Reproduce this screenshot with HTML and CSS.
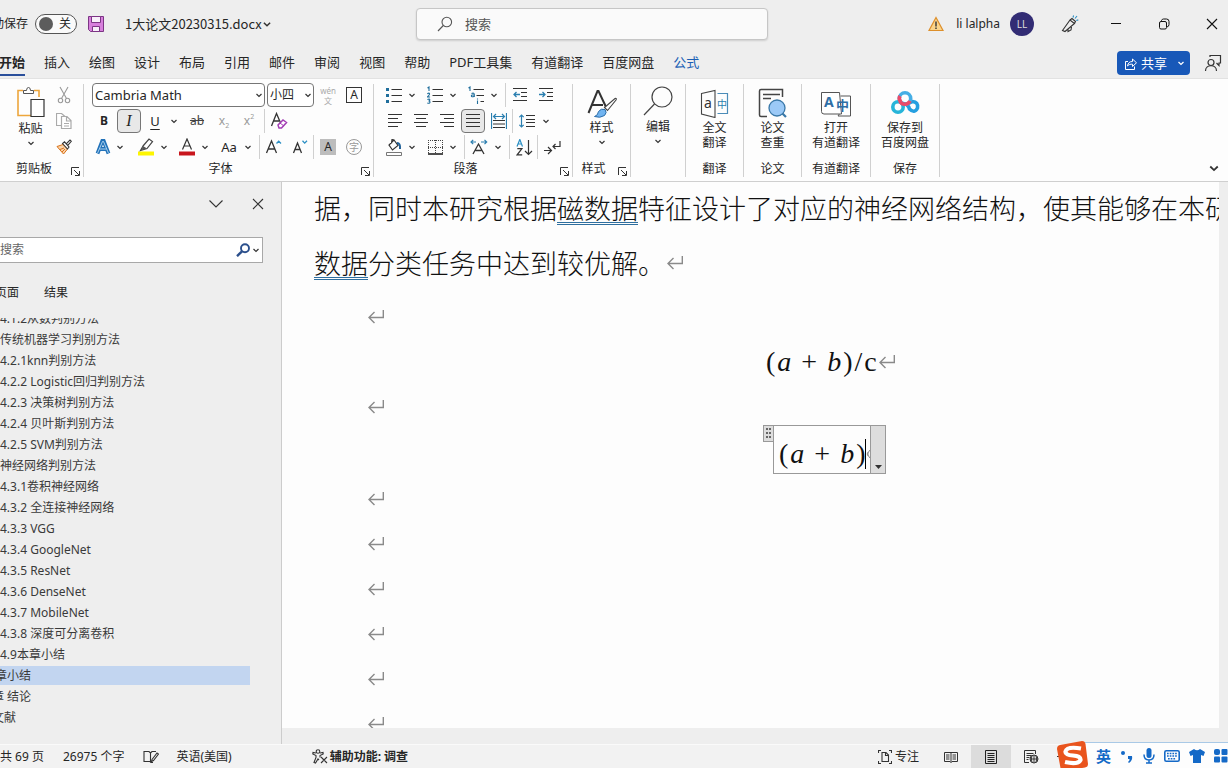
FILE: index.html
```html
<!DOCTYPE html>
<html lang="zh-CN">
<head>
<meta charset="utf-8">
<title>1大论文20230315.docx</title>
<link rel="stylesheet" href="styles.css">
</head>
<body>
<svg class="defs" aria-hidden="true">
  <symbol id="chev" viewBox="0 0 8 8"><path d="M1.5 3 4 5.4 6.500 3" fill="none" stroke="#333" stroke-width="1.200"/></symbol>
  <symbol id="launch" viewBox="0 0 9 9"><path d="M.5 8V.5H8M3 3l5 5M8.500 4v4.500H4" fill="none" stroke="#333"/></symbol>
  <symbol id="ret" viewBox="0 0 16 14"><path d="M15.300 0v7.500H1M6.500 2 1 7.500 6.500 13" fill="none" stroke="#8a8a8a" stroke-width="1.400"/></symbol>
</svg>
<div class="window">
  <header class="titlebar">
    <div class="title-left">
      <span class="autosave">动保存</span>
      <button class="toggle" aria-label="自动保存"><i></i>关</button>
      <button class="plain save" aria-label="保存"><svg width="16" height="16" viewBox="0 0 16 16"><path d="M.5.5h15v15H2.500l-2-2z" fill="#d77fdc" stroke="#7c3585"/><path d="M3.500.5h9v6h-9zM4.500 10.500h7v5h-7z" fill="#f8effa" stroke="#7c3585"/></svg></button>
      <button class="plain docname">1大论文20230315.docx<svg width="10" height="10"><use href="#chev"/></svg></button>
    </div>
    <label class="search">
      <svg width="16" height="16" viewBox="0 0 16 16" fill="none" stroke="#555" stroke-width="1.100"><circle cx="9.800" cy="6" r="4.800"/><path d="M6.300 9.500 1 15"/></svg>
      <input type="text" placeholder="搜索" aria-label="搜索">
    </label>
    <div class="title-right">
      <svg width="16" height="16" viewBox="0 0 16 16"><path d="M8 1.500 15 14.500H1z" fill="#fbd48a" stroke="#dd8f2b" stroke-width="1.200"/><path d="M8 5.500v5M8 11.500v1.600" stroke="#333" stroke-width="1.400"/></svg>
      <span class="user">li lalpha</span>
      <span class="avatar">LL</span>
      <button class="plain pen" aria-label="即将推出"><svg width="18" height="18" viewBox="0 0 18 18" fill="none" stroke="#333" stroke-width="1.100"><path d="M1.500 15.500 9 5l4.500 3.500L4 16.500zM9 5l2-1.500 3.500 3-1 2M7 13.800v2.700l3-1.500.5-3"/><path d="m12 2.500.6-2M14 3.500l2-2.500M15.300 5.500l2-.6" stroke="#2b8fc4"/></svg></button>
      <button class="plain winbtn" aria-label="最小化"><svg width="12" height="12" viewBox="0 0 12 12"><path d="M1 5.500h10" stroke="#111"/></svg></button>
      <button class="plain winbtn" aria-label="还原"><svg width="12" height="12" viewBox="0 0 12 12" fill="none" stroke="#111"><rect x="1.500" y="3.500" width="7" height="7.500" rx="1.500"/><path d="M3.500 3V2.500Q4 1 5.500 1h3q2.500 0 2.500 2.500v3Q11 8.500 9 9"/></svg></button>
      <button class="plain winbtn last" aria-label="关闭"><svg width="12" height="12" viewBox="0 0 12 12"><path d="m1 1 10 10M11 1 1 11" stroke="#111" stroke-width="1.100"/></svg></button>
    </div>
  </header>

  <nav class="tabs">
    <button class="tab active">开始</button><button class="tab">插入</button><button class="tab">绘图</button><button class="tab">设计</button><button class="tab">布局</button><button class="tab">引用</button><button class="tab">邮件</button><button class="tab">审阅</button><button class="tab">视图</button><button class="tab">帮助</button><button class="tab">PDF工具集</button><button class="tab">有道翻译</button><button class="tab">百度网盘</button><button class="tab blue">公式</button>
    <button class="share"><svg width="13" height="13" viewBox="0 0 13 13" fill="none" stroke="#fff"><path d="M4 4.500H1.500v8h9V9.500M3.500 9c.5-3 2-4.500 5-4.500V2l4 3.800-4 3.700V7.200C6.500 7 5 7.500 3.500 9z"/></svg><span>共享</span><svg class="share-chev" width="8" height="8" viewBox="0 0 8 8"><path d="m1.500 3 2.500 2.400L6.500 3" fill="none" stroke="#fff" stroke-width="1.300"/></svg></button>
    <button class="plain comment" aria-label="批注"><svg width="18" height="18" viewBox="0 0 18 18" fill="none" stroke="#333" stroke-width="1.200"><circle cx="7" cy="8.500" r="3"/><path d="M1.500 17c0-7 11-7 11 0M6 3V1.500h10.500V9H15v2.500L12.500 9"/></svg></button>
  </nav>

  <section class="ribbon">
    <div class="group g-clip">
      <div class="clip">
        <button class="big paste"><svg width="30" height="32" viewBox="0 0 30 32" fill="none"><path d="M7 3.500H2v25h13M18 3.500h5V10" stroke="#eda63c" stroke-width="1.600"/><path d="M7.500 6.500v-3h3q0-3 2-3t2 3h3v3z" fill="#fff" stroke="#555"/><path d="M15 12.500h13V29.500H15z" fill="#fff" stroke="#333" stroke-width="1.200"/></svg><span>粘贴</span><svg class="down" width="8" height="8"><use href="#chev"/></svg></button>
        <div class="clip-side">
          <button class="ic" aria-label="剪切"><svg width="16" height="18" viewBox="0 0 16 18" fill="none" stroke="#999" stroke-width="1.100"><path d="m4 1 6.500 11.500M12 1 5.500 12.500"/><circle cx="4.500" cy="14.500" r="2.200"/><circle cx="11.500" cy="14.500" r="2.200"/></svg></button>
          <button class="ic" aria-label="复制"><svg width="16" height="16" viewBox="0 0 16 16" fill="#fff" stroke="#aaa" stroke-width="1.200"><path d="M5.500 12.500h-5v-12h5L9 3.500M5.500 3.500H11l4 4v8H5.500zM10.500 4v4H15M8 10.500h5M8 13h5"/></svg></button>
          <button class="ic" aria-label="格式刷"><svg width="16" height="16" viewBox="0 0 16 16"><path d="m1 7.500 6-2L11.500 10l-4 5z" fill="#fbd3a8" stroke="#d9731c"/><path d="m6.500 4.500 5 5.500 1.500-2-4.500-5.200zM10.200 4.800 14 1l1.300 1.300-3.500 4" fill="#fff" stroke="#333" stroke-width="1.100"/><path d="m4 10.500 4-1.500M6 13l3-3" stroke="#d9731c"/></svg></button>
        </div>
      </div>
      <footer>剪贴板<svg class="launch" width="9" height="9"><use href="#launch"/></svg></footer>
    </div>

    <div class="group g-font">
      <div class="row">
        <span class="combo font-name"><select aria-label="字体"><option>Cambria Math</option></select><svg width="8" height="8"><use href="#chev"/></svg></span>
        <span class="combo font-size"><select aria-label="字号"><option>小四</option></select><svg width="8" height="8"><use href="#chev"/></svg></span>
        <button class="ic w26 wen"><span>wén</span><span>文</span></button>
        <button class="ic w26"><span class="boxed">A</span></button>
      </div>
      <div class="row">
        <button class="ic w24 bold">B</button>
        <button class="ic w24 on ital">I</button>
        <button class="ic w26 under">U</button><button class="ic w12" aria-label="更多下划线"><svg width="8" height="8"><use href="#chev"/></svg></button>
        <button class="ic w34 strike">ab</button>
        <button class="ic w20 gray">x<sub>2</sub></button>
        <button class="ic w30 gray">x<sup>2</sup></button>
        <i class="sep"></i>
        <button class="ic w26" aria-label="清除格式"><svg width="18" height="18" viewBox="0 0 18 18" fill="none"><path d="M1.500 14 6.500 1.500 11 12M3.500 9H9" stroke="#333" stroke-width="1.300"/><path d="m8 13 5-5 3.500 2.500-5 5.500H9z" fill="#fff" stroke="#a23cb4" stroke-width="1.500"/><path d="m10 11 4 3" stroke="#a23cb4"/></svg></button>
      </div>
      <div class="row">
        <button class="ic w22" aria-label="文本效果"><svg width="16" height="16" viewBox="0 0 16 16"><path d="M2.500 14.500 7.300 2h1.400l4.800 12.500M4.500 10h7" fill="none" stroke="#2272b9" stroke-width="3.800"/><path d="M2.600 14 7.500 2.500h1L13.400 14M4.500 10h7" fill="none" stroke="#c9e6fa" stroke-width=".8"/></svg></button><button class="ic w12" aria-label="更多效果"><svg width="8" height="8"><use href="#chev"/></svg></button>
        <button class="ic w24 ml8" aria-label="突出显示"><svg width="16" height="18" viewBox="0 0 16 18"><path d="M0 13.500h16v4H0z" fill="#fdf500"/><path d="m5 8 6-7 3.500 2.500L9 10.500l-6.500 2z" fill="#fff" stroke="#444" stroke-width="1.200"/><path d="m5 8 4 2.500-5.500 1.500z" fill="#555"/></svg></button><button class="ic w12" aria-label="突出显示颜色"><svg width="8" height="8"><use href="#chev"/></svg></button>
        <button class="ic w24 ml5" aria-label="字体颜色"><svg width="16" height="18" viewBox="0 0 16 18"><path d="M0 13.500h16v4H0z" fill="#c8161d"/><path d="M3.500 11.500 8 1l4.500 10.500M5.200 8h5.600" fill="none" stroke="#333" stroke-width="1.200"/></svg></button><button class="ic w12" aria-label="更多颜色"><svg width="8" height="8"><use href="#chev"/></svg></button>
        <button class="ic w26 ml5 case">Aa</button><button class="ic w12" aria-label="更改大小写"><svg width="8" height="8"><use href="#chev"/></svg></button>
        <i class="sep ml5"></i>
        <button class="ic w26" aria-label="增大字号"><svg width="18" height="16" viewBox="0 0 18 16" fill="none"><path d="M1.500 14 6.500 2l5 12M3.300 10h6.400" stroke="#333" stroke-width="1.300"/><path d="m11.500 4.500 2.200-2.300L16 4.500" stroke="#2b8fc4" stroke-width="1.300"/></svg></button>
        <button class="ic w26" aria-label="减小字号"><svg width="18" height="16" viewBox="0 0 18 16" fill="none"><path d="M2.500 14 6.500 4l4 10M4 10.500h5" stroke="#333" stroke-width="1.300"/><path d="m11.500 1.800 2.200 2.300L16 1.800" stroke="#2b8fc4" stroke-width="1.300"/></svg></button>
        <i class="sep"></i>
        <button class="ic w26"><span class="shade">A</span></button>
        <button class="ic w26"><span class="ring">字</span></button>
      </div>
      <footer>字体<svg class="launch" width="9" height="9"><use href="#launch"/></svg></footer>
    </div>

    <div class="group g-para">
      <div class="row">
        <button class="ic w24" aria-label="项目符号"><svg width="16" height="16" viewBox="0 0 16 16"><path d="M0 1h3v3H0zM0 7h3v3H0zM0 13h3v3H0z" fill="#1f6e9c"/><path d="M5.500 2.500H16M5.500 8.500H16M5.500 14.500H16" stroke="#333"/></svg></button><button class="ic w12" aria-label="更多符号"><svg width="8" height="8"><use href="#chev"/></svg></button>
        <button class="ic w24 ml5" aria-label="编号"><svg width="16" height="18" viewBox="0 0 16 18" fill="none"><path d="M.5 2 2 1v4M.3 7.800Q2.500 6.300 2.600 8q0 .8-2.200 3h2.700M.4 13.500q2.500-1 2.400.5-.3 1-1.300 1 1.600.1 1.500 1.200-.2 1.500-2.700.8" stroke="#1f6e9c" stroke-width="1.100"/><path d="M5.500 3.500H16M5.500 9.500H16M5.500 15.500H16" stroke="#333"/></svg></button><button class="ic w12" aria-label="更多编号"><svg width="8" height="8"><use href="#chev"/></svg></button>
        <button class="ic w24 ml5" aria-label="多级列表"><svg width="16" height="18" viewBox="0 0 16 18" fill="none"><path d="M.5 2 2 1v4M3.500 7.500q2.800-1 2.800 1V11M6.300 9q-3-.3-3 1 .3 1.500 3 .2M9.500 14.500V18M9.500 12.500v1" stroke="#1f6e9c" stroke-width="1.100"/><path d="M5.500 3.500H16M8.500 9.500H16M12.500 15.500H16" stroke="#333"/></svg></button><button class="ic w12" aria-label="更多列表"><svg width="8" height="8"><use href="#chev"/></svg></button>
        <i class="sep ml5"></i>
        <button class="ic w26" aria-label="减少缩进"><svg width="14" height="14" viewBox="0 0 14 14" fill="none"><path d="M0 .5h14M8 4.500h6M8 8.500h6M0 12.500h14" stroke="#333"/><path d="M7 6.500H1M3.500 4 1 6.500 3.500 9" stroke="#2b7fb0" stroke-width="1.300"/></svg></button>
        <button class="ic w26" aria-label="增加缩进"><svg width="14" height="14" viewBox="0 0 14 14" fill="none"><path d="M0 .5h14M8 4.500h6M8 8.500h6M0 12.500h14" stroke="#333"/><path d="M0 6.500h6M3.500 4 6 6.500 3.500 9" stroke="#2b7fb0" stroke-width="1.300"/></svg></button>
      </div>
      <div class="row">
        <button class="ic w26" aria-label="左对齐"><svg width="14" height="14" viewBox="0 0 14 14"><path d="M0 .5h14M0 4.500h10M0 8.500h14M0 12.500h10" stroke="#333"/></svg></button>
        <button class="ic w26" aria-label="居中"><svg width="14" height="14" viewBox="0 0 14 14"><path d="M0 .5h14M2 4.500h10M0 8.500h14M2 12.500h10" stroke="#333"/></svg></button>
        <button class="ic w26" aria-label="右对齐"><svg width="14" height="14" viewBox="0 0 14 14"><path d="M0 .5h14M4 4.500h10M0 8.500h14M4 12.500h10" stroke="#333"/></svg></button>
        <button class="ic w24 on" aria-label="两端对齐"><svg width="14" height="14" viewBox="0 0 14 14"><path d="M0 .5h14M0 4.500h14M0 8.500h14M0 12.500h14" stroke="#333"/></svg></button>
        <button class="ic w26" aria-label="分散对齐"><svg width="16" height="16" viewBox="0 0 16 16" fill="none"><path d="M.5 0v16M15.500 0v16M2.500 3.500h11M5 1 2.500 3.500 5 6M11 1l2.500 2.500L11 6" stroke="#2b7fb0" stroke-width="1.200"/><path d="M2 7.500h12M2 11h12M2 14.500h12" stroke="#333"/></svg></button>
        <i class="sep"></i>
        <button class="ic w26" aria-label="行距"><svg width="16" height="14" viewBox="0 0 16 14" fill="none"><path d="M7 1.500h9M7 5.500h9M7 8.500h9M7 12.500h9" stroke="#333"/><path d="M2.500 1v12M.3 3.200 2.500 1l2.200 2.200M.3 10.800 2.500 13l2.200-2.200" stroke="#2b7fb0" stroke-width="1.200"/></svg></button><button class="ic w12" aria-label="更多行距"><svg width="8" height="8"><use href="#chev"/></svg></button>
      </div>
      <div class="row">
        <button class="ic w24" aria-label="底纹"><svg width="16" height="17" viewBox="0 0 16 17" fill="none"><path d="M.5 13.500h15v3H.5z" stroke="#777"/><path d="m8 1 4 5.500L6.500 11 3 6zM8 1 6 .5l-.5 4" stroke="#333" stroke-width="1.200"/><path d="M11 4q3.500 0 3 6" stroke="#1f5f96" stroke-width="2"/></svg></button><button class="ic w12" aria-label="更多底纹"><svg width="8" height="8"><use href="#chev"/></svg></button>
        <button class="ic w24 ml5" aria-label="边框"><svg width="15" height="15" viewBox="0 0 15 15"><path d="M0 .5h15M0 7.500h15M.5 0v14M7.500 0v14M14.500 0v14" stroke="#444" stroke-dasharray="1 1"/><path d="M0 14h15" stroke="#222" stroke-width="1.600"/></svg></button><button class="ic w12" aria-label="更多边框"><svg width="8" height="8"><use href="#chev"/></svg></button>
        <i class="sep ml5"></i>
        <button class="ic w26" aria-label="中文版式"><svg width="18" height="16" viewBox="0 0 18 16" fill="none"><path d="M3 15 8.500 5 14 15M5.500 11.500h6" stroke="#333" stroke-width="1.300"/><path d="M6 3H1M3.200.8 1 3l2.200 2.200M11 3h5.500M14.500.8 16.700 3l-2.200 2.200" stroke="#2b7fb0" stroke-width="1.200"/></svg></button><button class="ic w12" aria-label="更多版式"><svg width="8" height="8"><use href="#chev"/></svg></button>
        <i class="sep ml5"></i>
        <button class="ic w26" aria-label="排序"><svg width="17" height="17" viewBox="0 0 17 17" fill="none"><path d="m1 7.500 2.800-7 2.700 7M2 5h3.600" stroke="#2b8fc4" stroke-width="1.200"/><path d="M1.300 9.700h4.600L1.200 15.800h5" stroke="#333" stroke-width="1.200"/><path d="M12.500 1v14.500M9 12l3.500 3.500L16 12" stroke="#333" stroke-width="1.200"/></svg></button>
        <i class="sep"></i>
        <button class="ic w26" aria-label="显示编辑标记"><svg width="17" height="15" viewBox="0 0 17 15" fill="none" stroke="#333" stroke-width="1.200"><path d="M16 1v5.500H9M11.500 4 9 6.500 11.500 9M0 10.500h7M4 7l3.500 3.500L4 14"/></svg></button>
      </div>
      <footer>段落<svg class="launch" width="9" height="9"><use href="#launch"/></svg></footer>
    </div>

    <div class="group g-58">
      <button class="big"><svg width="30" height="32" viewBox="0 0 30 32" fill="none"><path d="M1.500 27 10.500 5h1L19 21M5 19h11" stroke="#333" stroke-width="2"/><path d="M17.500 21.500 28 12.500q2-.5 1 1.500l-8.500 10.500z" fill="#fff" stroke="#444" stroke-width="1.100"/><path d="M7.500 30.500q3.500-1 4-5 2.500-3.500 6.500-2 2.500 3-.5 6-4.500 3-10 1z" fill="#71b4f0" stroke="#2a6ca8"/></svg><span>样式</span><svg class="down" width="8" height="8"><use href="#chev"/></svg></button>
      <footer class="shift">样式<svg class="launch" width="9" height="9"><use href="#launch"/></svg></footer>
    </div>
    <div class="group g-55">
      <button class="big edit"><svg width="30" height="30" viewBox="0 0 30 30" fill="none" stroke="#444" stroke-width="1.200"><circle cx="19" cy="11" r="10"/><path d="M11.500 18 1 29"/></svg><span>编辑</span><svg class="down" width="8" height="8"><use href="#chev"/></svg></button>
    </div>
    <div class="group g-58">
      <button class="big"><svg width="30" height="32" viewBox="0 0 30 32" fill="none"><path d="M1.500 7.500 15 4.500v27L1.500 28z" stroke="#444" stroke-width="1.100"/><path d="M17.500 7.500h10v20h-10" stroke="#4b8cb8" stroke-width="1.200"/><text class="ico-a" x="4" y="22">a</text><text class="ico-z" x="17" y="22">中</text></svg><span>全文<br>翻译</span></button>
      <footer>翻译</footer>
    </div>
    <div class="group g-58">
      <button class="big"><svg width="30" height="32" viewBox="0 0 30 32" fill="none"><path d="M9 30.500H3q-1.500 0-1.500-1.500V5q0-1.500 1.500-1.500h21.500V11M5 8.500h17M5 12.500h8" stroke="#444" stroke-width="1.500"/><circle cx="19" cy="22" r="8" fill="#9bc9f7" stroke="#3a78a8" stroke-width="1.300"/><path d="m24.500 27.500 3.500 3.500" stroke="#3a78a8" stroke-width="2.200"/></svg><span>论文<br>查重</span></button>
      <footer>论文</footer>
    </div>
    <div class="group g-69">
      <button class="big"><svg width="30" height="32" viewBox="0 0 30 32" fill="none"><path d="M19 27 17 30h12.500V10H19.500" fill="#fff" stroke="#555"/><path d="M.5 6.500h18l2 21.500H3q-2.500 0-2.500-2.500z" fill="#fff" stroke="#555"/><text class="ico-b" x="3" y="21">A</text><text class="ico-c" x="15" y="24">中</text></svg><span>打开<br>有道翻译</span></button>
      <footer>有道翻译</footer>
    </div>
    <div class="group g-69">
      <button class="big"><svg width="30" height="32" viewBox="0 0 30 32" fill="none" stroke-width="3.600"><circle cx="8" cy="21" r="5.200" stroke="#27b5d9"/><path d="M11.500 17q7 1 8 6 5 5 8-1 1-6-5-6.500l-4 2" stroke="#259fe0"/><circle cx="15" cy="12.500" r="5.700" stroke="#45aee5"/><path d="M10 15.500a5.700 5.700 0 0 0 10-.5M11 16q-3-3-1-6" stroke="#ec4b69"/></svg><span>保存到<br>百度网盘</span></button>
      <footer>保存</footer>
    </div>
    <button class="plain collapse" aria-label="折叠功能区"><svg width="12" height="12"><use href="#chev"/></svg></button>
  </section>

  <main class="work">
    <aside class="navpane">
      <div class="pane-head">
        <button class="plain" aria-label="任务窗格选项"><svg width="14" height="8" viewBox="0 0 14 8"><path d="m.5.5 6.500 6.500L13.500.5" fill="none" stroke="#333" stroke-width="1.100"/></svg></button>
        <button class="plain" aria-label="关闭窗格"><svg width="12" height="12" viewBox="0 0 12 12"><path d="m1 1 10 10M11 1 1 11" stroke="#333" stroke-width="1.100"/></svg></button>
      </div>
      <div class="pane-search"><input type="text" placeholder="搜索" aria-label="搜索文档"><svg width="14" height="14" viewBox="0 0 14 14" fill="none" stroke="#2b4f8c"><circle cx="9" cy="5.200" r="4" stroke-width="1.900"/><path d="M6 8.300 1 13.200" stroke-width="2.400"/></svg><svg width="8" height="8"><use href="#chev"/></svg></div>
      <div class="pane-tabs"><button class="plain">页面</button><button class="plain">结果</button></div>
      <div class="outline">
        <a href="#">4.1.2从数判别方法</a>
        <a href="#">传统机器学习判别方法</a>
        <a href="#">4.2.1knn判别方法</a>
        <a href="#">4.2.2 Logistic回归判别方法</a>
        <a href="#">4.2.3 决策树判别方法</a>
        <a href="#">4.2.4 贝叶斯判别方法</a>
        <a href="#">4.2.5 SVM判别方法</a>
        <a href="#">神经网络判别方法</a>
        <a href="#">4.3.1卷积神经网络</a>
        <a href="#">4.3.2 全连接神经网络</a>
        <a href="#">4.3.3 VGG</a>
        <a href="#">4.3.4 GoogleNet</a>
        <a href="#">4.3.5 ResNet</a>
        <a href="#">4.3.6 DenseNet</a>
        <a href="#">4.3.7 MobileNet</a>
        <a href="#">4.3.8 深度可分离卷积</a>
        <a href="#">4.9本章小结</a>
        <a href="#" class="current"><span class="cut">章小结</span></a>
        <a href="#"><span class="cut8">章 结论</span></a>
        <a href="#"><span class="cut8">文献</span></a>
      </div>
    </aside>
    <article class="page">
      <p class="body-text">据，同时本研究根据<u>磁数据</u>特征设计了对应的神经网络结构，使其能够在本研</p>
      <p class="body-text"><u>数据</u>分类任务中达到较优解。<svg class="ret" width="16" height="14"><use href="#ret"/></svg></p>
      <div class="lines">
        <p class="line"><svg width="16" height="14"><use href="#ret"/></svg></p>
        <p class="math"><span>(</span><em>a</em><span class="op">+</span><em>b</em><span>)</span><span>/</span><span>c</span><svg width="16" height="14"><use href="#ret"/></svg></p>
        <p class="line"><svg width="16" height="14"><use href="#ret"/></svg></p>
        <div class="mathbox">
          <span class="handle"><svg width="5" height="11" viewBox="0 0 5 11" fill="#666"><path d="M0 0h2v2H0zM3 0h2v2H3zM0 4h2v2H0zM3 4h2v2H3zM0 8h2v2H0zM3 8h2v2H3z"/></svg></span>
          <p class="math frame"><span>(</span><em>a</em><span class="op">+</span><em>b</em><span>)</span><i class="caret"></i><svg width="4" height="8" viewBox="0 0 4 8"><path d="M4 0 1 4l3 4M2 2v4" fill="none" stroke="#888"/></svg></p>
          <button class="drop" aria-label="公式选项"><svg width="7" height="4" viewBox="0 0 7 4"><path d="M0 0h7L3.500 4z" fill="#333"/></svg></button>
        </div>
        <p class="line"><svg width="16" height="14"><use href="#ret"/></svg></p>
        <p class="line"><svg width="16" height="14"><use href="#ret"/></svg></p>
        <p class="line"><svg width="16" height="14"><use href="#ret"/></svg></p>
        <p class="line"><svg width="16" height="14"><use href="#ret"/></svg></p>
        <p class="line"><svg width="16" height="14"><use href="#ret"/></svg></p>
        <p class="line"><svg width="16" height="14"><use href="#ret"/></svg></p>
      </div>
    </article>
  </main>

  <footer class="status">
    <span class="pages">共 69 页</span>
    <span class="words">26975 个字</span>
    <svg class="proof" width="16" height="14" viewBox="0 0 16 14" fill="none" stroke="#333" stroke-width="1.100"><path d="M10 12.500H8l-1-1H1v-10h5l1.500 1.500L9 1.500h4M7.500 3v9"/><path d="m9 9.500 5-6.500 1.500 1-5 6.500-2 1z"/></svg>
    <span class="lang">英语(美国)</span>
    <svg class="acc" width="16" height="15" viewBox="0 0 16 15" fill="none" stroke="#333" stroke-width="1.100"><circle cx="6" cy="2.500" r="1.800"/><path d="M4 4 1 3.500.8 5 4 6.500v2L2 13.500l1.500.5L6 10l1 1M8 4l3-.5.2 1.500L8 6.500v2M9 8l6 6M15 8l-6 6"/></svg>
    <strong>辅助功能: 调查</strong>
    <span class="grow"></span>
    <button class="plain focus"><svg width="14" height="14" viewBox="0 0 14 14" fill="none" stroke="#333" stroke-width="1.100"><path d="M3 .5H.5V3M11 .5h2.500V3M3 13.500H.5V11M11 13.500h2.500V11M4 2.500h4l2.500 2.500v6.500H4zM7.500 3v2.500H10"/></svg>专注</button>
    <button class="plain view" aria-label="阅读视图"><svg width="14" height="12" viewBox="0 0 14 12" fill="none" stroke="#333"><path d="M7 1.500H.5v9H6l1 1 1-1h5.500v-9zM7 1.500v10M2 4h3.500M2 6h3.500M2 8h3.500M8.500 4H12M8.500 6H12M8.500 8H12"/></svg></button>
    <button class="plain view active" aria-label="页面视图"><svg width="12" height="14" viewBox="0 0 12 14" fill="none" stroke="#222"><path d="M.5.5h11v13H.5zM2.500 3.500h7M2.500 5.500h7M2.500 7.500h7M2.500 9.500h7M2.500 11.500h7"/></svg></button>
    <button class="plain view" aria-label="Web 版式"><svg width="15" height="14" viewBox="0 0 15 14" fill="none" stroke="#333"><path d="M5 12.500H.5V.5h11V4M2.500 3.500h7M2.500 5.500h5M2.500 7.500h3M2.500 9.500h2"/><circle cx="10" cy="9" r="4"/><path d="M6 9h8M10 5v8M8 6q-1.500 3 0 6M12 6q1.500 3 0 6"/></svg></button>
    <span class="zoom-minus"></span>
  </footer>

  <div class="ime">
    <svg width="34" height="32" viewBox="0 0 34 32"><path d="m4 5 22-4q3 0 3.500 3L32 24q0 3-3 3.500L8 31q-3 0-3.500-3L1 9q0-3.500 3-4z" fill="#e9541d"/><path d="M25 8.500Q11 6 9.500 11.500 9 15 17 15.500t7.500 4.500Q22 25 9 22" fill="none" stroke="#fff" stroke-width="4.200"/></svg>
    <b>英</b>
    <svg width="14" height="14" viewBox="0 0 14 14" fill="#1469c7"><circle cx="3" cy="4" r="2"/><path d="M8 7h4q1 4-3 7l-1-1q2-1.500 1.500-3H8z"/></svg>
    <svg width="12" height="16" viewBox="0 0 12 16"><rect x="3.500" y="0" width="5" height="10" rx="2.500" fill="#1469c7"/><path d="M1 6.500q0 5.500 5 5.500t5-5.500M6 12v3M3 15h6" fill="none" stroke="#1469c7" stroke-width="1.500"/></svg>
    <svg width="16" height="12" viewBox="0 0 16 12"><rect x=".8" y=".8" width="14.400" height="10.400" rx="1.500" fill="none" stroke="#1469c7" stroke-width="1.600"/><path d="M3 3.500h10M3 6h10M4 8.800h8" stroke="#1469c7" stroke-width="1.500" stroke-dasharray="1.700 1"/></svg>
    <svg width="16" height="14" viewBox="0 0 16 14"><path d="M5 0q3 2.500 6 0l5 3-1.500 4L12 6v8H4V6L1.500 7 0 3z" fill="#1469c7"/></svg>
    <svg width="14" height="14" viewBox="0 0 14 14" fill="#1469c7"><rect width="6" height="6" rx="2"/><rect x="7.500" width="6" height="6" rx="1"/><rect y="7.500" width="6" height="6" rx="1"/><rect x="7.500" y="7.500" width="6" height="6" rx="1"/></svg>
  </div>
</div>
</body>
</html>
```
FILE: styles.css
```css
* { box-sizing: border-box; }
body {
  margin: 0;
  font: 12px/16px "Noto Sans", "Noto Sans CJK SC", sans-serif;
  color: #262626;
  background: #eeeeee;
}
button, input, select { font: inherit; color: inherit; }
button { padding: 0; border: 0; background: none; }
p { margin: 0; }
svg { display: block; flex: none; }
.defs { position: absolute; width: 0; height: 0; }
.plain { display: flex; align-items: center; }

.window {
  position: relative;
  height: 100vh;
  display: flex;
  flex-direction: column;
  overflow: hidden;
}

/* Title bar */
.titlebar {
  flex: none;
  height: 48px;
  display: grid;
  grid-template-columns: 416fr minmax(0, 352px) 460fr;
  align-items: center;
}
.title-left, .title-right { display: flex; align-items: center; white-space: nowrap; }
.autosave { margin-left: -8px; width: 43px; }
.toggle {
  width: 42px;
  height: 20px;
  display: flex;
  align-items: center;
  gap: 6px;
  padding-left: 3px;
  border: 1px solid #555;
  border-radius: 10px;
  background: #fafafa;
}
.toggle i { width: 14px; height: 14px; border-radius: 50%; background: #5c5c5c; }
.save { margin-left: 11px; }
.docname { margin-left: 21px; font: 13px/18px "Noto Sans CJK SC", sans-serif; }
.search {
  height: 32px;
  display: flex;
  align-items: center;
  gap: 12px;
  padding-left: 20px;
  border: 1px solid #c6c6c6;
  border-radius: 4px;
  background: #fafafa;
  box-shadow: 0 1px 2px #00000022;
}
.search input { min-width: 0; flex: 1; border: 0; padding: 0; background: none; font-size: 13px; }
.search input::placeholder { color: #555; opacity: 1; }
.title-right { justify-content: flex-end; }
.user { margin-left: 12px; }
.avatar {
  width: 24px;
  height: 24px;
  margin: 0 27px 0 10px;
  border-radius: 50%;
  background: #322c74;
  color: #ddd;
  font-size: 10px;
  line-height: 24px;
  text-align: center;
}
.pen { margin-right: 31px; }
.winbtn { margin-right: 36px; }
.winbtn.last { margin-right: 10px; }

/* Tabs */
.tabs { flex: none; height: 30px; display: flex; align-items: flex-start; gap: 19px; margin-left: -1px; white-space: nowrap; }
.tab { height: 28px; padding-top: 2px; font-size: 13px; border-bottom: 2px solid transparent; }
.tab.active { font-weight: 700; border-color: #2a4f9b; }
.tab.blue { color: #1a5fb4; }
.share {
  width: 73px;
  height: 24px;
  margin: 3px 0 0 auto;
  display: flex;
  align-items: center;
  padding-left: 7px;
  gap: 4px;
  border-radius: 4px;
  background: #1858b8;
  color: #fff;
  font-size: 13px;
}
.share-chev { margin-left: 6px; }
.comment { margin: 6px 6px 0 -5px; }

/* Ribbon */
.ribbon {
  position: relative;
  flex: none;
  height: 104px;
  display: flex;
  padding: 5px 0 4px;
  background: #fdfdfd;
  border-top: 1px solid #e2e2e2;
  border-bottom: 1px solid #cfcfcf;
}
.group { flex: none; display: flex; flex-direction: column; border-right: 1px solid #d0d0d0; }
.g-clip { width: 84px; }
.g-font { width: 290px; padding-left: 8px; }
.g-para { width: 199px; padding-left: 8px; }
.g-58 { width: 58px; }
.g-55 { width: 55px; }
.g-69 { width: 69px; }
.group footer { position: relative; margin-top: auto; height: 16px; text-align: center; }
.g-clip footer { padding-right: 15px; }
.g-font footer { padding-right: 24px; }
.g-para footer { padding-right: 23px; }
.group footer.shift { padding-right: 16px; }
.launch { position: absolute; right: 3px; bottom: 1px; }
.row { display: flex; align-items: center; height: 26px; }
.row:first-child { margin-top: -2px; }
.ic { flex: none; height: 24px; display: flex; align-items: center; justify-content: center; }
.w12 { width: 12px; }
.w20 { width: 20px; }
.w22 { width: 22px; }
.w24 { width: 24px; }
.w26 { width: 26px; }
.w30 { width: 30px; }
.w34 { width: 34px; }
.ml5 { margin-left: 5px; }
.ml8 { margin-left: 8px; }
.on { margin: 0 1px; border: 1px solid #777; border-radius: 4px; background: #e8e8e8; }
.sep { flex: none; width: 1px; height: 24px; margin-right: 1px; background: #d0d0d0; }

.clip { display: flex; }
.clip-side { display: flex; flex-direction: column; gap: 2px; margin-top: -1px; }
.clip-side .ic { width: 18px; }
.big { display: flex; flex-direction: column; align-items: center; gap: 2px; width: 100%; padding-top: 2px; line-height: 15px; }
.big .down { margin-top: 1px; }
.big.paste { width: 55px; padding: 3px 0 0 6px; }
.big.edit > svg:first-child { margin-bottom: 1px; }

.combo { position: relative; height: 24px; }
.combo select {
  width: 100%;
  height: 24px;
  padding: 0 2px;
  appearance: none;
  border: 1px solid #767676;
  border-radius: 4px;
  background: #fff;
}
.combo svg { position: absolute; right: 2px; top: 8px; }
.font-name { width: 173px; margin-right: 2px; }
.font-name select { font-size: 13px; }
.font-size { width: 47px; margin-right: 1px; }
.wen { flex-direction: column; color: #aaa; font-size: 8px; line-height: 12px; }
.wen span { height: 10px; }
.boxed { width: 16px; height: 16px; border: 1px solid #333; font-size: 12px; line-height: 14px; text-align: center; }
.bold { font-weight: 700; }
.ital { font: italic 16px "Liberation Serif", serif; }
.under { text-decoration: underline; text-underline-offset: 3px; font-size: 13px; }
.strike { text-decoration: line-through; font-size: 12px; color: #444; }
.gray { color: #999; }
.gray sub, .gray sup { font-size: 7px; line-height: 8px; }
.gray sub { margin-top: 9px; }
.gray sup { margin-bottom: 9px; }
.case { font-size: 13px; }
.shade { width: 16px; height: 16px; background: #bdbdbd; text-align: center; }
.ring { width: 16px; height: 16px; border: 1px solid #999; border-radius: 50%; color: #999; font-size: 10px; line-height: 14px; text-align: center; }
.ico-a { font-size: 14px; fill: #333; }
.ico-z { font-size: 10px; fill: #2b7fb0; }
.ico-b { font-size: 14px; font-weight: 700; fill: #2f6ea5; }
.ico-c { font-size: 13px; font-weight: 700; fill: #2f6ea5; }
.collapse { position: absolute; right: 8px; bottom: 7px; }

/* Work area */
.work { flex: 1; min-height: 0; display: flex; }
.navpane {
  flex: none;
  width: 282px;
  display: flex;
  flex-direction: column;
  border-right: 1px solid #cccccc;
  background: #eeeeee;
}
.pane-head { display: flex; justify-content: flex-end; gap: 29px; padding: 15px 17px 0 0; height: 55px; align-items: flex-start; }
.pane-head button { height: 14px; }
.pane-search {
  height: 26px;
  margin-right: 18px;
  display: flex;
  align-items: center;
  gap: 2px;
  padding-right: 2px;
  border: 1px solid #a8a8a8;
  border-left: 0;
  background: #fff;
}
.pane-search input { flex: 1; min-width: 0; padding: 0; border: 0; background: none; }
.pane-search input::placeholder { color: #666; opacity: 1; }
.pane-tabs { display: flex; gap: 25px; margin: 22px 0 0 -5px; }
.outline { flex: 1; margin-top: 17px; overflow: hidden; }
.outline a {
  display: block;
  height: 21px;
  margin-right: 31px;
  padding: 1px 0;
  line-height: 19px;
  color: #3a3a3a;
  text-decoration: none;
  white-space: nowrap;
}
.outline a:first-child { margin-top: -10px; }
.outline .current { background: #c2d5f0; background-clip: content-box; }
.cut { margin-left: -5px; }
.cut8 { margin-left: -8px; }

.page {
  flex: 1;
  min-width: 0;
  margin: 0 9px 16px 0;
  overflow: hidden;
  background: #fdfdfd;
}
.body-text {
  display: flex;
  align-items: center;
  height: 55px;
  padding: 0 0 4px 32px;
  font: 300 27px/40px "Noto Sans CJK SC", sans-serif;
  color: #111;
  white-space: nowrap;
}
.body-text u { text-decoration: underline double #2f6f9f 1px; text-underline-offset: 3px; }
.ret { margin-left: 2px; }
.lines { padding-top: 2px; }
.line { height: 45px; display: flex; align-items: center; padding-left: 86px; }
.math {
  display: flex;
  align-items: center;
  gap: 2px;
  height: 45px;
  padding-left: 484px;
  font: 28px/34px "Liberation Serif", serif;
  color: #111;
}
.math .op { margin: 0 8px; }
.mathbox { display: flex; align-items: flex-start; height: 49px; margin: -4px 0 2px; padding-left: 481px; }
.handle { display: flex; align-items: center; justify-content: center; width: 11px; height: 17px; border: 1px solid #999; background: #ddd; }
.frame { gap: 2px; height: 49px; margin-left: -1px; padding: 9px 0 0 5px; border: 1px solid #999; }
.frame .caret { width: 1px; height: 30px; margin: 0 -2px; background: #000; }
.drop { align-self: stretch; width: 15px; display: flex; align-items: flex-end; justify-content: center; padding-bottom: 4px; border: 1px solid #999; border-left: 0; background: #ddd; }

/* Status bar */
.status {
  flex: none;
  height: 24px;
  display: flex;
  align-items: center;
  border-top: 1px solid #fafafa;
  background: #f2f2f2;
  white-space: nowrap;
}
.words { margin-left: 19px; }
.proof { margin: 0 17px 0 19px; }
.acc { margin: 0 2px 0 80px; }
.grow { flex: 1; }
.focus { gap: 3px; margin-right: 12px; }
.view { width: 40px; height: 23px; justify-content: center; }
.view.active { background: #dcdcdc; }
.zoom-minus { width: 5px; height: 1px; margin: 0 166px 0 6px; background: #333; }
.ime {
  position: absolute;
  right: 0;
  bottom: 0;
  width: 143px;
  height: 26px;
  display: flex;
  align-items: center;
  gap: 9px;
  border-top: 1px solid #a9c9e6;
  background: #fdfdfd;
}
.ime svg:first-child { margin: 0 -3px 0 -29px; }
.ime b { color: #1469c7; font-size: 15px; line-height: 20px; }
```
